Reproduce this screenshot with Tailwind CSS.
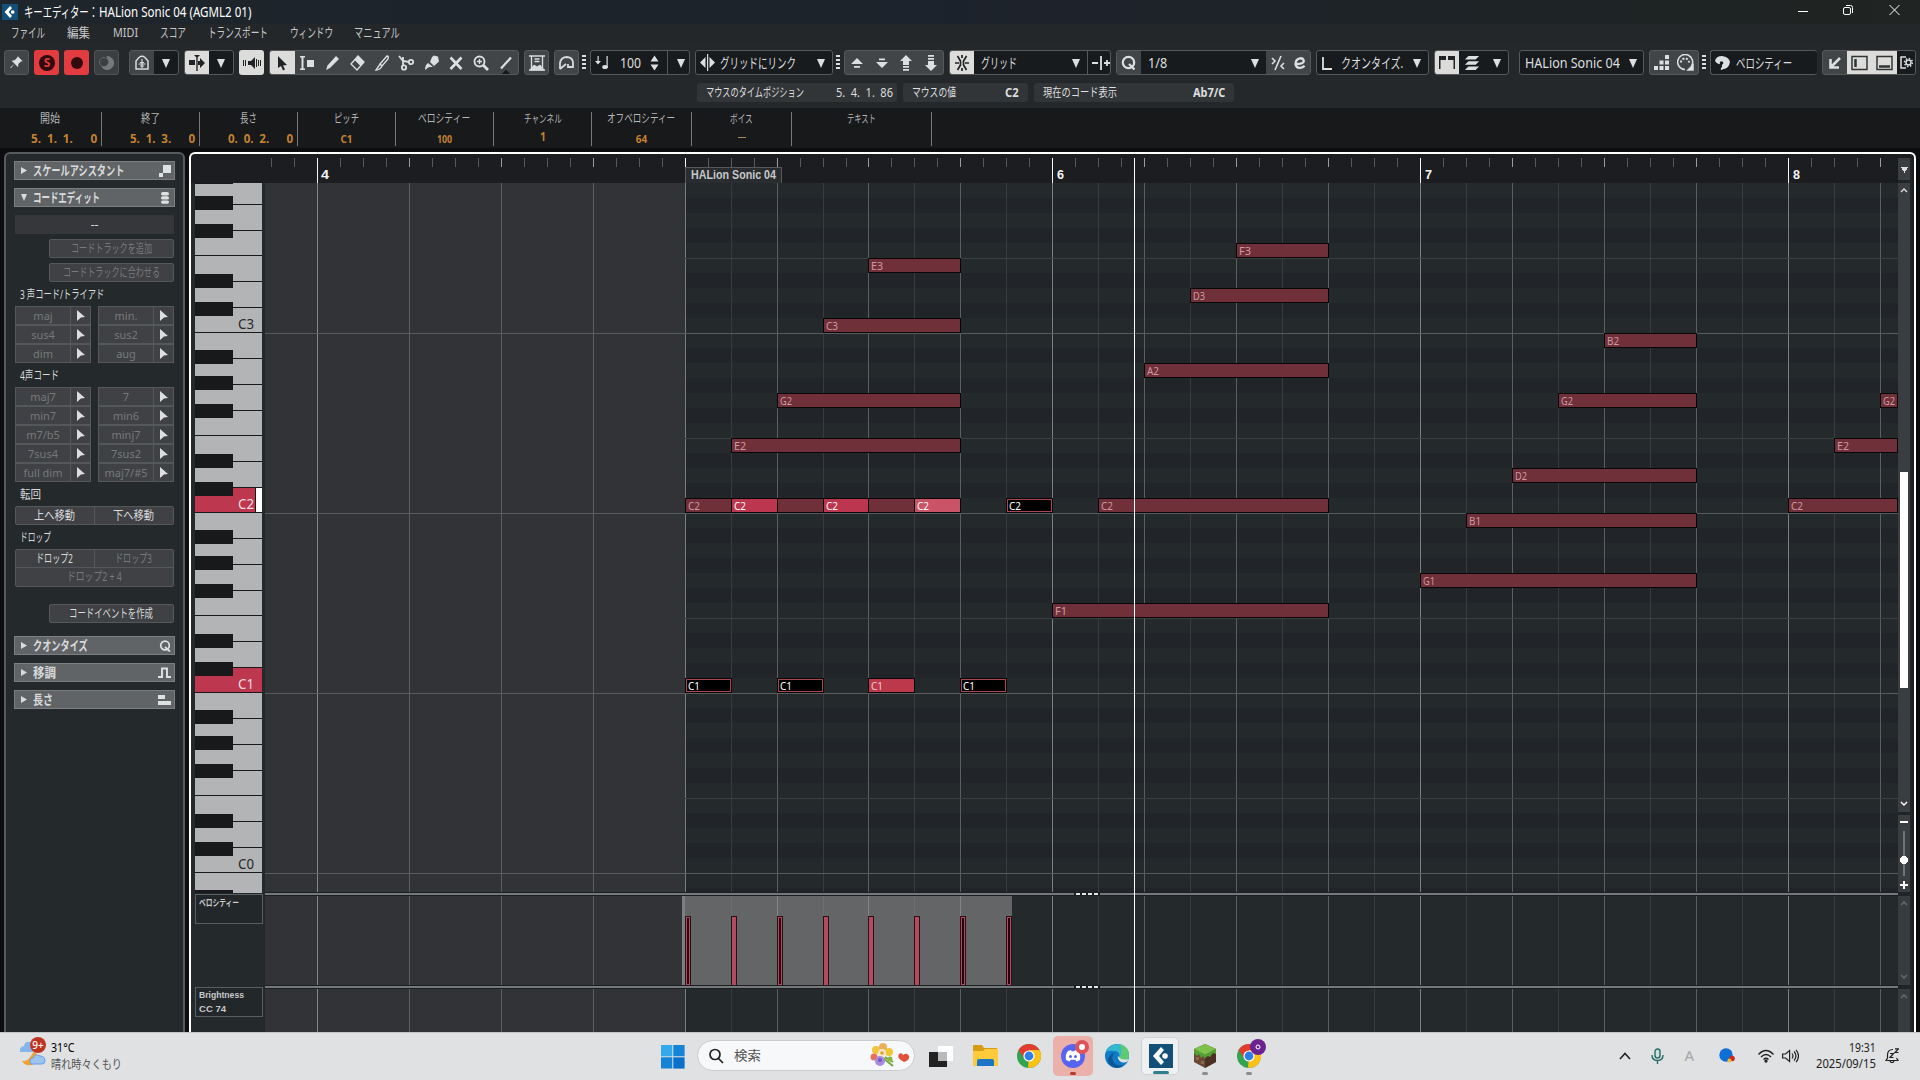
<!DOCTYPE html>
<html lang="ja">
<head>
    <meta charset="UTF-8">
    <meta name="viewport" content="width=device-width, initial-scale=1.0">
    <title>キーエディター： HALion Sonic 04</title>
    <script src="https://cdn.jsdelivr.net/npm/@tailwindcss/browser@4"></script>
    <style>
        body { font-family: "Noto Sans", "Noto Sans CJK JP", sans-serif; }
        [data-w] { display: inline-block; white-space: nowrap; flex-shrink: 0; transform-origin: 0 50%; }
    </style>
</head>
<body class="w-[1920px] h-[1080px] overflow-hidden bg-[#0c0d0e] text-[#dcdedf] text-[13px] leading-none flex flex-col">

    <!-- Icon sprites -->
    <svg class="hidden">
        <symbol id="pin" viewBox="0 0 24 24"><path d="M14 2l8 8-3 .5-4 4-.5 5L9 14l-6 7-1-1 7-6-5-5 5-.5 4-4z" fill="currentColor"/></symbol>
        <symbol id="down" viewBox="0 0 8 10"><path d="M0 1h8L4 10z" fill="currentColor"/></symbol>
        <symbol id="cursor" viewBox="0 0 8 11"><path d="M0 0l8 7-4 .5L0 11z" fill="currentColor"/></symbol>
        <symbol id="dots" viewBox="0 0 4 14"><path d="M0 0h4v2H0zM0 4h4v2H0zM0 8h4v2H0zM0 12h4v2H0z" fill="currentColor"/></symbol>
        <symbol id="cubase" viewBox="0 0 24 24"><path d="M0 0h24v24H0z" fill="#135078"/><path d="M12 3l3 3-5 6 5 6-3 3-8-9z" fill="#fff"/><circle cx="16" cy="12" r="2.8" fill="#fff"/></symbol>
        <symbol id="chrome" viewBox="0 0 24 24"><circle cx="12" cy="12" r="12" fill="#33a350"/><path d="M12 12l10.400-6A12 12 0 0 1 12 24l-1-1z" fill="#fbc116"/><path d="M22.400 6H12v6l5 3z" fill="#fbc116"/><path d="M1.600 6A12 12 0 0 1 12 0a12 12 0 0 1 10.400 6H12L7 14z" fill="#e33b2e"/><circle cx="12" cy="12" r="5.600" fill="#fff"/><circle cx="12" cy="12" r="4.400" fill="#2f7de8"/></symbol>
    </svg>

    <!-- Title bar -->
    <header class="h-6 shrink-0 bg-linear-to-r from-[#1e252b] via-[#1c222b] to-[#202422] flex items-center pl-[2px] text-white">
        <svg class="w-4 h-4 mr-[6px]"><use href="#cubase"/></svg>
        <span data-w="74" class="text-[14px]">キーエディター：</span>
        <span data-w="152" class="text-[14px] ml-[1px]">HALion Sonic 04 (AGML2 01)</span>
        <div class="ml-auto flex items-center gap-[35px] pr-5 -mt-1">
            <svg class="w-[10px] h-[12px]"><path d="M0 7.500h10" stroke="#fff"/></svg>
            <svg class="w-[11px] h-[12px]" fill="none" stroke="#fff"><rect x=".5" y="3.500" width="7" height="7" rx="1.500"/><path d="M3 1.500h4.500q2 0 2 2V9"/></svg>
            <svg class="w-[11px] h-[12px]"><path d="M.5 1l10 10M10.500 1l-10 10" stroke="#fff"/></svg>
        </div>
    </header>

    <!-- Menu -->
    <nav class="h-[18px] shrink-0 bg-[#23272a] flex items-center pl-[11px] pb-[2px] text-[13px] text-[#c6c8c9]">
        <span data-w="34">ファイル</span>
        <span data-w="23" class="ml-[22px]">編集</span>
        <span data-w="25" class="ml-[23px]">MIDI</span>
        <span data-w="26" class="ml-[22px]">スコア</span>
        <span data-w="60" class="ml-[22px]">トランスポート</span>
        <span data-w="43" class="ml-[22px]">ウィンドウ</span>
        <span data-w="46" class="ml-[21px]">マニュアル</span>
    </nav>

    <!-- Toolbar -->
    <div class="h-[41px] pt-2 shrink-0 bg-[#24282b] flex gap-[5px] pl-1 [&>div]:h-[25px] [&>div]:flex [&>div]:items-center [&>div]:shrink-0 [&>div]:rounded-[3px] [&>div]:overflow-hidden [&_svg]:shrink-0">
        <div class="w-[25px] bg-[#424548] border border-[#56595c] justify-center"><svg class="w-[15px] h-[15px]"><use href="#pin"/></svg></div>
        <div class="w-[25px] bg-[#e23b40] justify-center"><svg class="w-4 h-4" viewBox="0 0 16 16"><circle cx="8" cy="8" r="8" fill="#300a0c"/><text x="8" y="12.300" text-anchor="middle" font-size="12" font-weight="700" fill="#e23b40">S</text></svg></div>
        <div class="w-[25px] bg-[#e23b40] justify-center"><i class="size-3 rounded-full bg-[#300a0c]"></i></div>
        <div class="w-[25px] bg-[#3c3f42] border border-[#505356] justify-center"><svg class="w-4 h-4" viewBox="0 0 16 16" fill="none" stroke="#777a7d"><path d="M8 1.500a6.500 6.500 0 1 1-5 10.500A7 7 0 0 0 8 1.500z" fill="#777a7d"/><circle cx="5" cy="7" r="4.500" fill="#3c3f42" stroke="#65686b"/></svg></div>
        <div class="w-[50px] ml-[5px] bg-[#181b1d] border border-[#56595c]">
            <span class="w-6 h-full bg-[#424548] flex items-center justify-center"><svg class="w-4 h-4" viewBox="0 0 16 16" fill="none" stroke="#d8dadb" stroke-width="1.500"><path d="M2 14V6l3-3.500Q8 0 11 2.500L14 6v8z"/><path d="M8 4v9M4.500 9h7M6 7.500h4M6 11h4" stroke-width="1.200"/></svg></span>
            <svg class="w-2 h-[10px] mx-auto"><use href="#down"/></svg>
        </div>
        <div class="w-[50px] bg-[#181b1d] border border-[#56595c]">
            <span class="w-6 h-full bg-[#dcdcda] flex items-center justify-center"><svg class="w-4 h-4" viewBox="0 0 16 16" fill="#202426"><path d="M7.300 0h1.400v16H7.300zM5 0h6L8 3zM0 5h6v5H0zM9 6h2V3l5 5-5 5v-3H9z"/></svg></span>
            <svg class="w-2 h-[10px] mx-auto"><use href="#down"/></svg>
        </div>
        <div class="w-[25px] bg-[#dcdcda] justify-center"><svg class="w-[18px] h-4" viewBox="0 0 18 16" fill="#202426"><path d="M5 6h3l4-4v12l-4-4H5zM0 5h1v6H0zM2 5h1v6H2zM13 4h1v8h-1zM15 5h1v6h-1zM17 5h1v6h-1z"/></svg></div>
        <div class="w-[250px] bg-[#424548] border border-[#56595c] [&>span]:w-[25px] [&>span]:h-full [&>span]:flex [&>span]:items-center [&>span]:justify-center [&_svg]:w-4 [&_svg]:h-4">
            <span class="bg-[#dcdcda]"><svg viewBox="0 0 16 16"><path d="M4 1l9 9-4 .5 2 4-2 1-2-4.500L4 13z" fill="#202426"/></svg></span>
            <span><svg viewBox="0 0 16 16"><path d="M1 1h5v1.500H4.500v11H6V15H1v-1.500h1.500v-11H1zM8 5h7v7H8z" fill="currentColor"/></svg></span>
            <span><svg viewBox="0 0 16 16"><path d="M12 1l3 3-9 9-4 2 1.500-4.500z" fill="currentColor"/></svg></span>
            <span><svg viewBox="0 0 16 16"><path d="M9 1l6 6-7 8-6-6z" fill="none" stroke="currentColor" stroke-width="1.300"/><path d="M9 1l6 6-3.500 4-6-6z" fill="currentColor"/></svg></span>
            <span><svg viewBox="0 0 16 16"><path d="M6 9l7-8q2 0 1 3L8 11zM6 9l2 2q-2 4-6 4z" fill="none" stroke="currentColor" stroke-width="1.400"/></svg></span>
            <span><svg viewBox="0 0 16 16" fill="none" stroke="currentColor" stroke-width="1.800"><path d="M1 1l4 5 6 1M5 2v8"/><circle cx="13" cy="7" r="2.200"/><circle cx="6" cy="12.500" r="2.200"/></svg></span>
            <span><svg viewBox="0 0 16 16" fill="currentColor"><path d="M9 2l2-1.500 4 1 1 5-5 4.500-4-4zM5 8l5 4-4 0-4 3q0-5 3-7z"/></svg></span>
            <span><svg viewBox="0 0 16 16"><path d="M2.500 2.500l11 11.500M13.500 2.500l-11 11.500" stroke="currentColor" stroke-width="2.600"/></svg></span>
            <span><svg viewBox="0 0 16 16" fill="none" stroke="currentColor" stroke-width="1.900"><circle cx="6.500" cy="6.500" r="5"/><path d="M10 10l5 5" stroke-width="2.800"/><path d="M4 6.500h5M6.500 4v5" stroke-width="1.400"/></svg></span>
            <span class="relative"><svg viewBox="0 0 16 16"><path d="M3 13.500l10-11" stroke="currentColor" stroke-width="2.200"/></svg><i class="absolute bottom-[-3px] size-[6px] rotate-45 bg-[#15181a]"></i></span>
        </div>
        <div class="w-[25px] bg-[#424548] border border-[#56595c] justify-center"><svg class="w-4 h-4" viewBox="0 0 16 16" fill="none" stroke="#d8dadb"><path d="M0 1h16M0 15h16M2.500 1v13M13.500 1v13M5.500 4h5M5.500 6.500h5" stroke-width="1.400"/><path d="M1 15l4-5 3 2 3-2 4 5z" fill="#d8dadb"/></svg></div>
        <div class="w-[25px] bg-[#424548] border border-[#56595c] justify-center"><svg class="w-[17px] h-4" viewBox="0 0 17 16" fill="none" stroke="#d8dadb" stroke-width="1.800"><path d="M2 14V8q1-6 7-6 6 .5 6 6v5M2 14l6-5M10 9v3h5"/></svg></div>
        <span class="w-[1px] pt-[5px]"><svg class="w-1 h-[14px] -ml-[2px]"><use href="#dots"/></svg></span>
        <div class="w-[100px] bg-[#181b1d] border border-[#56595c]">
            <svg class="w-[15px] h-[15px] ml-1" viewBox="0 0 15 15" fill="currentColor"><path d="M2.500 1h1.200v5H6L3 9.500 0 6h2.500zM11.500 1h1.200v12h-1.200z"/><ellipse cx="10" cy="12" rx="2.800" ry="2"/></svg>
            <span data-w="21" class="ml-[10px] text-[14px]">100</span>
            <svg class="w-[9px] h-[18px] ml-[9px]" viewBox="0 0 9 18" fill="currentColor"><path d="M4.500 1.500L8.500 7.500h-8zM.5 10.500h8L4.500 16.500z"/></svg>
            <i class="w-px h-full bg-[#56595c] ml-[8px]"></i>
            <svg class="w-2 h-[10px] ml-[9px]"><use href="#down"/></svg>
        </div>
        <div class="w-[138px] bg-[#181b1d] border border-[#56595c]">
            <svg class="w-[15px] h-[17px] ml-1 mr-[5px]" viewBox="0 0 15 17" fill="currentColor"><path d="M5.500 3v11L0 8.500zM7 0h1.200v17H7zM9.500 3v11L15 8.500z"/></svg>
            <span data-w="76" class="text-[14px]">グリッドにリンク</span>
            <svg class="w-2 h-[10px] ml-[21px]"><use href="#down"/></svg>
        </div>
        <span class="w-[1px] pt-[5px]"><svg class="w-1 h-[14px] -ml-[2px]"><use href="#dots"/></svg></span>
        <div class="w-[100px] bg-[#424548] border border-[#56595c] justify-around [&>svg]:w-3 [&>svg]:h-[16px]">
            <svg viewBox="0 0 12 16" fill="currentColor"><path d="M6 3l6 6H0zM3 11h6v1.800H3z"/></svg>
            <svg viewBox="0 0 12 16" fill="currentColor"><path d="M6 13L0 7h12zM3 3.500h6v1.800H3z"/></svg>
            <svg viewBox="0 0 12 16" fill="currentColor"><path d="M6 0l6 6H9v4H3V6H0zM3 11h6v1.800H3zM3 14h6v1.800H3z"/></svg>
            <svg viewBox="0 0 12 16" fill="currentColor"><path d="M6 16l-6-6h3V6h6v4h3zM3 0h6v1.800H3zM3 3h6v1.800H3z"/></svg>
        </div>
        <div class="w-[162px] bg-[#181b1d] border border-[#56595c]">
            <span class="w-6 h-full bg-[#dcdcda] flex items-center justify-center"><svg class="w-[14px] h-4" viewBox="0 0 14 16" fill="none" stroke="#202426" stroke-width="1.700"><path d="M2.500 1l3 5v4l-3 5M11.500 1l-3 5v4l3 5M0 8h4M14 8h-4M7 0v3M7 13v3"/></svg></span>
            <span data-w="36" class="ml-[7px] text-[14px]">グリッド</span>
            <svg class="w-2 h-[10px] ml-[55px]"><use href="#down"/></svg>
            <i class="w-px h-full bg-[#56595c] ml-[7px]"></i>
            <svg class="w-[18px] h-4 ml-[4px]" viewBox="0 0 18 16" stroke="currentColor" stroke-width="1.800"><path d="M0 8h6M9 1v14M12 8h6M15 5v6"/></svg>
        </div>
        <div class="w-[195px] bg-[#181b1d] border border-[#56595c]">
            <span class="w-6 h-full bg-[#424548] flex items-center justify-center"><svg class="w-4 h-4" viewBox="0 0 16 16" fill="none" stroke="#dcdedf" stroke-width="2.200"><circle cx="7.500" cy="7.500" r="5.700"/><path d="M8 9l5.500 5.500"/></svg></span>
            <span data-w="19" class="ml-[7px] text-[14px]">1/8</span>
            <svg class="w-2 h-[10px] ml-[84px]"><use href="#down"/></svg>
            <span class="ml-auto w-[44px] h-full bg-[#424548] flex items-center justify-around"><svg class="w-[14px] h-4" viewBox="0 0 14 16" fill="none" stroke="#dcdedf" stroke-width="1.600"><path d="M10 1L4 15M1 3l3 3-3 3M13 8l-3 3 3 3"/></svg><svg class="w-3 h-3" viewBox="0 0 12 12" fill="none" stroke="#dcdedf" stroke-width="2.300"><path d="M2 7Q10 7 9.800 3.800 9 1 6 1.300 1.500 2 1.500 7 2 11 6 10.800q3 0 4.500-2"/></svg></span>
        </div>
        <div class="w-[113px] bg-[#181b1d] border border-[#56595c]">
            <svg class="w-[10px] h-4 ml-[5px]" viewBox="0 0 10 16" fill="none" stroke="#dcdedf" stroke-width="1.800"><path d="M1 2v12h9"/></svg>
            <span data-w="62" class="ml-[9px] text-[14px]">クオンタイズ.</span>
            <svg class="w-2 h-[10px] ml-[10px]"><use href="#down"/></svg>
        </div>
        <div class="w-[75px] bg-[#181b1d] border border-[#56595c]">
            <span class="w-6 h-full bg-[#dcdcda] flex items-center justify-center"><svg class="w-4 h-[18px]" viewBox="0 0 16 18" fill="#202426"><path d="M0 2h7v4H1.500v9H0zM9 2h7v13h-1.500V6H9z"/></svg></span>
            <svg class="w-4 h-[16px] ml-[5px]" viewBox="0 0 16 18" fill="currentColor"><path d="M4 1h12l-4 4H0zM4 7h12l-4 4H0zM4 13h12l-4 4H0z"/></svg>
            <svg class="w-2 h-[10px] ml-[13px]"><use href="#down"/></svg>
        </div>
        <div class="w-[125px] ml-[5px] bg-[#181b1d] border border-[#56595c]">
            <span data-w="95" class="ml-[5px] text-[14px]">HALion Sonic 04</span>
            <svg class="w-2 h-[10px] ml-[9px]"><use href="#down"/></svg>
        </div>
        <div class="w-[50px] bg-[#424548] border border-[#56595c] justify-around">
            <svg class="w-[15px] h-[15px]" viewBox="0 0 15 15" fill="currentColor"><path d="M0 11h4v4H0zM5.500 11h4v4h-4zM11 11h4v4h-4zM5.500 5.500h4v4h-4zM11 5.500h4v4h-4zM11 0h4v4h-4z"/></svg>
            <svg class="w-[17px] h-[17px]" viewBox="0 0 17 17" fill="none" stroke="#dcdedf" stroke-width="1.500"><path d="M14.500 12A7.500 7.500 0 1 0 8 15.500"/><path d="M4 8.500a4 4 0 0 1 8 0" stroke-width="2" stroke-dasharray="2 1.500"/><path d="M16 11v5h-5z" fill="#dcdedf"/></svg>
        </div>
        <span class="w-[1px] pt-[5px]"><svg class="w-1 h-[14px] -ml-[2px]"><use href="#dots"/></svg></span>
        <div class="w-[107px] bg-[#181b1d] border border-r-0 border-[#56595c]">
            <svg class="w-[15px] h-4 ml-1" viewBox="0 0 15 16" fill="currentColor"><path d="M0 6q1-5 7-5 7 1 8 6-1 6-6 7l-3 1q-1-2 1-3V8Q3 11 0 6z"/><circle cx="6.500" cy="8" r="1.800" fill="#181b1d"/></svg>
            <span data-w="56" class="ml-[6px] text-[14px]">ベロシティー</span>
        </div>
        <div class="w-[94px] bg-[#424548] border border-[#56595c]">
            <span class="w-6 flex justify-center"><svg class="w-3 h-3" viewBox="0 0 12 12" fill="none" stroke="#dcdedf" stroke-width="2.600"><path d="M11 1L2 10M1.500 2v8.500H10"/></svg></span>
            <span class="w-[50px] h-full bg-[#dcdcda] flex items-center justify-around"><svg class="w-[17px] h-4" viewBox="0 0 17 16" fill="none" stroke="#303436" stroke-width="1.500"><path d="M1 1.500h15v13H1z"/><path d="M4.500 4v8" stroke-width="2.500"/></svg><svg class="w-[17px] h-4" viewBox="0 0 17 16" fill="none" stroke="#303436" stroke-width="1.500"><path d="M1 1.500h15v13H1z"/><path d="M3 11.500h11" stroke-width="2.500"/></svg></span>
            <span class="flex-1 h-full bg-[#181b1d] flex items-center justify-center"><svg class="w-[13px] h-[13px]" viewBox="0 0 13 13" fill="none" stroke="#dcdedf" stroke-width="1.500"><path d="M6 1H1v11h5"/><circle cx="8.500" cy="6.500" r="2.500"/><circle cx="8.500" cy="6.500" r="4" stroke-dasharray="1.500 1.600"/></svg></span>
        </div>
    </div>

    <!-- Status line -->
    <div class="h-[25px] shrink-0 bg-[#24282b] flex gap-[6px] pl-[697px] text-[12px] [&>div]:h-[19px] [&>div]:bg-[#323538] [&>div]:rounded-[3px] [&>div]:flex [&>div]:items-center [&>div]:justify-between [&>div]:px-[9px]">
        <div class="w-[200px]"><span data-w="98">マウスのタイムポジション</span><span data-w="57" class="-mr-[5px]">5.&ensp;4.&ensp;1.&ensp;86</span></div>
        <div class="w-[125px]"><span data-w="44">マウスの値</span><span data-w="14" class="font-bold">C2</span></div>
        <div class="w-[200px]"><span data-w="74">現在のコード表示</span><span data-w="32" class="font-bold">Ab7/C</span></div>
    </div>

    <!-- Info line -->
    <div class="h-10 shrink-0 bg-[#17191b] flex items-start pt-1 text-[12px] text-[#b4b6b7] [&>div]:h-[34px] [&>div]:border-r [&>div]:border-[#76797a] [&>div]:flex [&>div]:flex-col [&>div]:items-center [&>div]:pt-[1px] [&>div]:gap-[7px]">
        <div class="w-[102px]"><span data-w="20">開始</span><b class="w-full pl-[31px] text-[#c5812f]"><span data-w="66" class="text-[13px]">5.&ensp;1.&ensp;1.&emsp;&ensp;0</span></b></div>
        <div class="w-[98px]"><span data-w="19">終了</span><b class="w-full pl-[28px] text-[#c5812f]"><span data-w="65" class="text-[13px]">5.&ensp;1.&ensp;3.&emsp;&ensp;0</span></b></div>
        <div class="w-[98px]"><span data-w="17">長さ</span><b class="w-full pl-[28px] text-[#c5812f]"><span data-w="65" class="text-[13px]">0.&ensp;0.&ensp;2.&emsp;&ensp;0</span></b></div>
        <div class="w-[98px]"><span data-w="25" class="text-[12px]">ピッチ</span><b data-w="12" class="text-[10px] text-[#c5812f] pt-[2px]">C1</b></div>
        <div class="w-[98px]"><span data-w="52" class="text-[12px]">ベロシティー</span><b data-w="15" class="text-[10px] text-[#c5812f] pt-[2px]">100</b></div>
        <div class="w-[98px]"><span data-w="38" class="text-[11px]">チャンネル</span><b data-w="6" class="text-[12px] text-[#c5812f]">1</b></div>
        <div class="w-[100px]"><span data-w="68" class="text-[12px]">オフベロシティー</span><b data-w="11" class="text-[10px] text-[#c5812f] pt-[2px]">64</b></div>
        <div class="w-[100px]"><span data-w="23" class="text-[11px]">ボイス</span><i class="w-2 h-px bg-[#a08a55] mt-[6px]"></i></div>
        <div class="w-[140px]"><span data-w="29" class="text-[11px]">テキスト</span></div>
    </div>

    <main class="h-[884px] shrink-0 flex pt-1 pl-1">
        <!-- Inspector -->
        <aside class="w-[181px] h-[881px] shrink-0 bg-[#24292c] border-2 border-b-0 border-[#585b5d] rounded-t-[6px] px-2 pt-[7px] text-[12px] text-[#d8dadb]">
            <div class="h-[19px] bg-[#606466] border border-[#7b7f81] flex items-center pl-[6px] pr-[3px] font-bold text-[13px]"><svg class="w-[6px] h-[7px] mr-[6px]"><path d="M0 0l6 3.500L0 7z" fill="currentColor"/></svg><span data-w="91">スケールアシスタント</span><svg class="w-3 h-3 ml-auto" fill="#dfe1e1"><path d="M4 0h8v8H4zM0 8h4v4H0z"/></svg></div>
            <div class="h-[19px] mt-2 bg-[#606466] border border-[#7b7f81] flex items-center pl-[6px] pr-[3px] font-bold text-[13px]"><svg class="w-[6px] h-[7px] mr-[6px]"><path d="M0 0h6L3 7z" fill="currentColor"/></svg><span data-w="67">コードエディット</span><svg class="w-3 h-3 ml-auto" fill="#dfe1e1"><rect x="2" y="0" width="8" height="3.400" rx="1.700"/><rect x="2" y="4.200" width="8" height="3.400" rx="1.700"/><rect x="2" y="8.400" width="8" height="3.400" rx="1.700"/></svg></div>
            <div class="h-[19px] mt-2 mx-px bg-[#35373a] flex items-center justify-center">--</div>
            <div class="h-[19px] mt-[5px] ml-[35px] mr-px bg-[#3f4144] border border-[#55585a] rounded-xs text-[#77797b] flex items-center justify-center"><span data-w="81">コードトラックを追加</span></div>
            <div class="h-[19px] mt-[5px] ml-[35px] mr-px bg-[#3f4144] border border-[#55585a] rounded-xs text-[#77797b] flex items-center justify-center"><span data-w="97">コードトラックに合わせる</span></div>
            <div class="h-6 pl-[6px] pt-[7px]"><span data-w="84">3 声コード/トライアド</span></div>
            <div id="triads" class="grid grid-cols-2 gap-x-[7px] mx-px text-[#77797b]"></div>
            <div class="h-6 pl-[6px] pt-[7px]"><span data-w="39">4声コード</span></div>
            <div id="tetrads" class="grid grid-cols-2 gap-x-[7px] mx-px text-[#77797b]"></div>
            <div class="h-6 pl-[6px] pt-[7px]"><span data-w="21">転回</span></div>
            <div class="h-[19px] mx-px bg-[#3f4144] border border-[#55585a] rounded-xs grid grid-cols-2 divide-x divide-[#55585a] items-stretch [&>div]:flex [&>div]:items-center [&>div]:justify-center"><div><span data-w="41">上へ移動</span></div><div><span data-w="41">下へ移動</span></div></div>
            <div class="h-6 pl-[6px] pt-[7px]"><span data-w="31">ドロップ</span></div>
            <div class="h-[38px] mx-px bg-[#3f4144] border border-[#55585a] rounded-xs grid grid-cols-2 grid-rows-2 [&>div]:flex [&>div]:items-center [&>div]:justify-center"><div class="border-r border-b border-[#55585a]"><span data-w="37">ドロップ2</span></div><div class="border-b border-[#55585a] text-[#77797b]"><span data-w="37">ドロップ3</span></div><div class="col-span-2 text-[#77797b]"><span data-w="55">ドロップ2 + 4</span></div></div>
            <div class="h-[19px] mt-[17px] ml-[35px] mr-px bg-[#3f4144] border border-[#55585a] rounded-xs flex items-center justify-center"><span data-w="84">コードイベントを作成</span></div>
            <div class="h-[19px] mt-[13px] bg-[#606466] border border-[#7b7f81] flex items-center pl-[6px] pr-[3px] font-bold text-[13px]"><svg class="w-[6px] h-[7px] mr-[6px]"><path d="M0 0l6 3.500L0 7z" fill="currentColor"/></svg><span data-w="55">クオンタイズ</span><svg class="w-3 h-3 ml-auto" fill="none" stroke="#dfe1e1" stroke-width="1.700"><circle cx="6" cy="5.500" r="4.300"/><path d="M6 7l5 4.500"/></svg></div>
            <div class="h-[19px] mt-2 bg-[#606466] border border-[#7b7f81] flex items-center pl-[6px] pr-[3px] font-bold text-[13px]"><svg class="w-[6px] h-[7px] mr-[6px]"><path d="M0 0l6 3.500L0 7z" fill="currentColor"/></svg><span data-w="23">移調</span><svg class="w-[13px] h-3 ml-auto" fill="none" stroke="#dfe1e1" stroke-width="1.900"><path d="M0 10h4V1.500h5V10h4"/></svg></div>
            <div class="h-[19px] mt-2 bg-[#606466] border border-[#7b7f81] flex items-center pl-[6px] pr-[3px] font-bold text-[13px]"><svg class="w-[6px] h-[7px] mr-[6px]"><path d="M0 0l6 3.500L0 7z" fill="currentColor"/></svg><span data-w="20">長さ</span><svg class="w-[13px] h-3 ml-auto" fill="#dfe1e1"><path d="M0 1h7v4H0zM0 7h13v4H0z"/></svg></div>
        </aside>

        <!-- Editor: piano, note grid and controller lanes -->
        <section id="canvas" class="relative ml-1 w-[1727px] h-[881px] bg-[#1b1d20] border-2 border-b-0 border-white rounded-t-[6px] overflow-hidden"></section>
    </main>

    <!-- Taskbar -->
    <footer class="h-12 w-[1920px] absolute top-[1032px] bg-[#dfe1e3] border-t border-[#c2c4c6] text-[#333] flex">
        <div class="w-[661px] flex pl-5 pt-[5px]">
            <div class="relative w-[31px]">
                <svg class="w-[27px] h-[30px]" viewBox="0 0 27 30"><path d="M0 14q-1-5 4-6 1-5 6-4l3 10z" fill="#86b5ea"/><path d="M14 13a8 8 0 1 1-12 10q7 1 12-10z" fill="#f2a130"/><path d="M11 26q-3-5 2-6 2-5 7-2 5 0 5 5 0 3-3 3z" fill="#9cc4f2" stroke="#6d9fe0"/></svg>
                <b class="absolute left-[10px] -top-px size-4 rounded-full bg-[#bf3323] text-white text-[10px] font-medium flex items-center justify-center">9+</b>
            </div>
            <div class="pt-[3px]"><div><span data-w="23" class="text-[12px] text-black">31°C</span></div><div class="mt-[4px]"><span data-w="71" class="text-[12px] text-[#555]">晴れ時々くもり</span></div></div>
        </div>
        <svg class="w-6 h-6 mt-3 shrink-0" fill="#1584d6"><path d="M0 0h11.300v11.300H0z" fill="#35aaeb"/><path d="M12.300 0h11.300v11.300H12.300zM0 12.300h11.300v11.300H0z"/><path d="M12.300 12.300h11.300v11.300H12.300z" fill="#0c70cb"/></svg>
        <div class="ml-3 mt-[7px] w-[218px] h-[31px] shrink-0 rounded-full bg-[#f7f8f9] border border-[#c9cbcd] flex items-center pl-[10px]">
            <svg class="w-4 h-4 shrink-0" fill="none" stroke="#222" stroke-width="1.700"><circle cx="7" cy="6.500" r="5"/><path d="M10.500 10.500l4.500 4.500"/></svg>
            <span data-w="27" class="ml-[10px] text-[13px] text-[#555]">検索</span>
            <svg class="w-[44px] h-7 ml-auto mr-px shrink-0" viewBox="0 0 44 28"><path d="M14 16l10 8M16 15l8 5" stroke="#6ea83a" stroke-width="2"/><circle cx="7" cy="8" r="4" fill="#f0c53b"/><circle cx="14" cy="5" r="4" fill="#e7b05a"/><circle cx="20" cy="10" r="4" fill="#f2c437"/><circle cx="5" cy="15" r="3.500" fill="#e8715c"/><circle cx="13" cy="11" r="4" fill="#f4e6cc"/><circle cx="11" cy="19" r="5" fill="#a98be0"/><circle cx="13" cy="11" r="1.800" fill="#e2a126"/><circle cx="11" cy="18" r="2" fill="#7456bd"/><circle cx="21" cy="17" r="2.500" fill="#86b843"/><path d="M35 20q-8-4-5-8 3-2 4 1 4-3 6 1 1 4-5 6z" fill="#e2503a"/></svg>
        </div>
        <!-- running apps -->
        <div class="relative ml-[14px] flex [&>svg]:shrink-0 [&>svg]:mt-[11px]">
            <svg class="w-6 h-6" viewBox="0 0 24 24"><path d="M0 8h18v15H0z" fill="#222"/><path d="M9 2h15v15H9z" fill="#fff"/><path d="M9 8h9v9H9z" fill="#b9babb"/></svg>
            <svg class="w-[25px] h-6 ml-5" viewBox="0 0 25 24"><path d="M0 2q0-1 1-1h8l2 3h13v5H0z" fill="#d79b16"/><path d="M0 7h10l2-2h13v17H0z" fill="#fccb3c"/><path d="M4 22v-5q0-2 2-2h13q2 0 2 2v5z" fill="#1c76c5"/></svg>
            <svg class="w-6 h-6 ml-[19px]"><use href="#chrome"/></svg>
            <div class="relative ml-3 mt-[3px] w-10 h-10 rounded-[5px] bg-[#ebb0aa]">
                <svg class="w-6 h-6 absolute left-2 top-2" viewBox="0 0 24 24"><circle cx="12" cy="12" r="12" fill="#5764ef"/><path d="M5 16q-1-6 2-9l3-1 .6 1.300h2.800L14 6l3 1q3 3 2 9l-3.500 1.500-1.200-1.800H9.700L8.500 17.500z" fill="#fff"/><circle cx="9.500" cy="12.500" r="1.500" fill="#5764ef"/><circle cx="14.500" cy="12.500" r="1.500" fill="#5764ef"/></svg>
                <i class="absolute left-[22px] top-1 size-[14px] rounded-full bg-white border-4 border-[#dd5358]"></i>
                <i class="absolute left-[17px] bottom-[1px] w-[6px] h-[3px] rounded-full bg-[#b83a2b]"></i>
            </div>
            <svg class="w-6 h-6 ml-3" viewBox="0 0 24 24"><circle cx="12" cy="12" r="12" fill="#1279c5"/><path d="M1 8Q5 0 13 0q10 1 11 11 0 6-7 6-4 0-3-3 2-6-4-7Q4 6 1 8z" fill="#34b8cf"/><path d="M15 0q9 3 9 11 0 6-7 6-4 0-3-3 4-6 1-14z" fill="#5ccb72"/><path d="M10 8q-4 4-2 9 3 6 11 4-7 6-14 0-6-7 5-13z" fill="#0c5797"/><path d="M24 15q-2 5-8 3-4-3-3-6 3 5 11 3z" fill="#dfe1e3"/></svg>
            <div class="relative ml-3 mt-[4px] w-[38px] h-[38px] rounded-[5px] bg-[#eef0f2] border border-[#d0d2d4]">
                <svg class="w-6 h-6 absolute left-[7px] top-[6px]"><use href="#cubase"/></svg>
                <i class="absolute left-[11px] bottom-0 w-4 h-[3px] rounded-full bg-[#2f7f8f]"></i>
            </div>
            <svg class="w-[22px] h-6 ml-[15px]" viewBox="0 0 22 24"><path d="M11 0l11 5v13l-11 6L0 18V5z" fill="#6b4934"/><path d="M11 11l11-6v13l-11 6z" fill="#4b3124"/><path d="M11 0l11 5-11 6L0 5z" fill="#7cc24c"/><path d="M0 5l11 6v4l-2-3-2 2-2-4-2 2-3-3zM22 5l-11 6v3l3-2 2 1 3-4 3 1z" fill="#55a035"/><path d="M2 13h3v3H2zM7 17h3v3H7z" fill="#8d6a4e"/></svg>
            <svg class="w-6 h-6 ml-[21px]"><use href="#chrome"/></svg>
            <svg class="w-4 h-4 absolute left-[321px] -top-[5px]" viewBox="0 0 16 16"><circle cx="8" cy="8" r="8" fill="#6c2390"/><circle cx="8" cy="8" r="2" fill="none" stroke="#fff"/></svg>
            <i class="absolute left-[273px] top-[39px] w-[6px] h-[3px] rounded-full bg-[#8a8c8e]"></i>
            <i class="absolute left-[317px] top-[39px] w-[6px] h-[3px] rounded-full bg-[#8a8c8e]"></i>
        </div>
        <!-- tray -->
        <div class="ml-auto flex items-center pb-[2px] pr-[21px] text-[#222]">
            <svg class="w-3 h-2" fill="none" stroke="#222" stroke-width="1.600"><path d="M1 7l5-5.500L11 7"/></svg>
            <svg class="w-[13px] h-4 ml-5" fill="none" stroke="#2b6b66" stroke-width="1.400"><rect x="4" y="1" width="5" height="9" rx="2.500" fill="#c9e3df"/><path d="M1 7q0 5.500 5.500 5.500T12 7M6.500 12.500V16"/></svg>
            <span class="ml-[20px] text-[15px] text-[#a4a6a8]">A</span>
            <svg class="w-4 h-4 ml-[25px]"><circle cx="7" cy="7" r="6.700" fill="#0b6fd6"/><circle cx="13" cy="10.500" r="2.800" fill="#c7291f"/><circle cx="10.500" cy="12.500" r="2" fill="#f2bd35"/></svg>
            <svg class="w-4 h-[14px] ml-[23px]" fill="none" stroke="#222" stroke-width="1.300"><path d="M.5 5.500q7.500-8 15 0M3 8q5-5 10 0M5.500 10.500q2.500-2.500 5 0"/><circle cx="8" cy="12" r="1" fill="#222"/></svg>
            <svg class="w-[17px] h-[14px] ml-2" fill="none" stroke="#222" stroke-width="1.200"><path d="M.6 5h3l4-3.500v11L3.600 9h-3zM10 4.500q2 2.500 0 5M12 2.500q4 4.500 0 9M14 .8q5 6.200 0 12.400"/></svg>
            <div class="ml-4 w-[61px] text-right text-[12px]"><div><span data-w="27">19:31</span></div><div class="mt-[4px]"><span data-w="60">2025/09/15</span></div></div>
            <svg class="w-[14px] h-[15px] ml-[9px]" fill="none" stroke="#222" stroke-width="1.200"><path d="M8 1.500Q2.500 1.500 2.500 7v3L1 12.500h12L11.500 10M5 12.500q0 2 2 2t2-2M5 5.500h3.500L5 9.500h3.500M10 .8h3.500L10 4.500h3.500"/></svg>
        </div>
    </footer>

    <script>
        const X0 = 191, Y0 = 154; // inner origin of the editor canvas
        const canvas = document.getElementById('canvas');

        // --- CHORD BUTTONS ---
        function chordButtons(id, names) {
            document.getElementById(id).innerHTML = names.map(n =>
                `<div class="h-[19px] bg-[#3f4144] border border-[#55585a] flex items-center"><span class="flex-1 text-center text-[11px]">${n}</span><span class="w-5 h-full border-l border-[#55585a] flex items-center justify-center text-[#dcdedf]"><svg class="w-2 h-[11px]"><use href="#cursor"/></svg></span></div>`).join('');
        }
        chordButtons('triads', ['maj', 'min.', 'sus4', 'sus2', 'dim', 'aug']);
        chordButtons('tetrads', ['maj7', '7', 'min7', 'min6', 'm7/b5', 'minj7', '7sus4', '7sus2', 'full dim', 'maj7/#5']);

        // --- GRID ---
        const bars = [-51, 317, 685, 1052, 1420, 1788];
        // bar 5 is one pixel shorter than the others
        const stepX = (bar, j) => bars[bar] + j * 46 - (bar === 2 && j > 3 ? 1 : 0);
        // x of the n-th eighth counted from bar 5
        const eighthX = n => stepX(2 + Math.floor(n / 8), n % 8);

        let s = '';
        const rect = (x, y, w, h, fill) => { s += `<rect x="${x - X0}" y="${y - Y0}" width="${w}" height="${h}" fill="${fill}"/>`; };
        const text = (x, y, t, size, fill, w, weight = 400, family = 'Noto Sans') => { s += `<text x="${x - X0}" y="${y - Y0}" font-family="${family}, Noto Sans CJK JP, sans-serif" font-size="${size}" font-weight="${weight}" fill="${fill}" textLength="${w}" lengthAdjust="spacingAndGlyphs">${t}</text>`; };

        rect(191, 183, 74, 850, '#24292c');
        rect(265, 158, 1633, 25, '#1b1d20');
        rect(265, 183, 420, 850, '#323336');
        rect(685, 183, 1213, 850, '#24292c');
        for (let p = -2; p < 47; p++) {
            const top = 858 - p * 15, note = ((p % 12) + 12) % 12;
            const y = Math.max(top, 183), h = Math.min(top + 15, 892) - y;
            if (h <= 0) continue;
            if ([1, 3, 6, 8, 10].includes(note)) rect(685, y, 1213, h, '#212428');
        }
        // ruler and vertical lines
        bars.forEach((b, i) => {
            for (let j = 0; j < 8; j++) {
                const x = stepX(i, j), lit = i >= 2;
                if (x > 264 && x < 1898) {
                    if (lit || j % 2 === 0) rect(x, 183, 1, 850, j === 0 ? (lit ? '#7a7e80' : '#85888a') : j % 2 === 0 ? '#5b5f61' : '#383c3e');
                    rect(x, 158, 1, j === 0 ? 25 : 9, j === 0 ? '#f4f4f4' : j % 2 === 0 ? '#999b9c' : '#55585a');
                }
                if (x + 23 > 264 && x + 23 < 1898) rect(x + 23, 158, 1, 9, '#55585a');
            }
        });
        // octave and fourth lines
        [333, 513, 693, 873].forEach(y => rect(265, y, 1633, 1, '#585b5d'));
        [258, 438, 618, 798].forEach(y => rect(685, y, 1213, 1, '#3c4043'));
        text(321, 179, '4', 13, '#f4f4f4', 8, 700, 'Liberation Sans');
        text(1057, 179, '6', 13, '#f4f4f4', 7, 700, 'Liberation Sans');
        text(1425, 179, '7', 13, '#f4f4f4', 7, 700, 'Liberation Sans');
        text(1793, 179, '8', 13, '#f4f4f4', 7, 700, 'Liberation Sans');
        rect(685, 167, 97, 16, '#55595b');
        rect(686, 168, 95, 15, '#292d2f');
        text(691, 179, 'HALion Sonic 04', 12, '#c6c8c9', 85, 700, 'Liberation Sans');

        // --- PIANO ---
        rect(195, 183, 67, 710, '#b3b4b6');
        rect(195, 668, 67, 24, '#bd384e');
        rect(195, 488, 61, 24, '#bd384e');
        rect(255, 488, 1, 24, '#17191b');
        rect(256, 488, 6, 24, '#fff');
        for (let b = 333; b <= 1053; b += 180) {
            [1, 26, 52, 78, 103, 129, 155].forEach(d => { if (b - d > 183 && b - d < 893) rect(195, b - d, 67, 1, '#17191b'); });
            [31, 59, 109, 137, 163].forEach(d => {
                const y = Math.max(b - d, 183), h = Math.min(b - d + 14, 893) - y;
                if (h > 0) rect(195, y, 38, h, '#17191b');
            });
        }
        rect(195, 183, 38, 1, '#17191b');
        text(238, 329, 'C3', 14, '#26282a', 16);
        text(238, 509, 'C2', 14, '#f4dde0', 16);
        text(238, 689, 'C1', 14, '#f4dde0', 16);
        text(238, 869, 'C0', 14, '#26282a', 16);

        // --- NOTES: [name, start, end, style] ---
        const semis = { C: 0, D: 2, E: 4, F: 5, G: 7, A: 9, B: 11 };
        const styles = {
            dim: ['#6f303a', '#cf9aa0'], sel: ['#bd3650', '#fff'], light: ['#cb5368', '#fff'],
            mute: ['#000', '#fff'], red: ['#bb394b', '#f6c9cf'],
        };
        const notes = [
            ['E3', 4, 6], ['C3', 3, 6], ['G2', 2, 6], ['E2', 1, 6],
            ['C2', 0, 1], ['C2', 1, 2, 'sel'], ['C2', 2, 3, 'dim', 1], ['C2', 3, 4, 'sel'], ['C2', 4, 5, 'dim', 1], ['C2', 5, 6, 'light'],
            ['C2', 7, 8, 'mute'], ['C2', 9, 14], ['F1', 8, 14], ['A2', 10, 14], ['D3', 11, 14], ['F3', 12, 14],
            ['G1', 16, 22], ['B1', 17, 22], ['D2', 18, 22], ['G2', 19, 22], ['B2', 20, 22],
            ['C2', 24, 28], ['E2', 25, 28], ['G2', 26, 28],
            ['C1', 0, 1, 'mute'], ['C1', 2, 3, 'mute'], ['C1', 4, 5, 'red'], ['C1', 6, 7, 'mute'],
        ];
        notes.forEach(([name, from, to, style = 'dim', bare]) => {
            const x = eighthX(from), end = Math.min(eighthX(to) + 1, 1898);
            const y = 858 - (semis[name[0]] + name[1] * 12) * 15;
            rect(x, y, end - x, 15, '#0a0506');
            if (style === 'mute') rect(x + 1, y + 1, end - x - 2, 13, '#a84652');
            const pad = style === 'mute' ? 2 : 1;
            rect(x + pad, y + pad, end - x - pad * 2, 15 - pad * 2, styles[style][0]);
            if (!bare) text(x + 3, y + 12, name, 10, styles[style][1], 12);
        });

        // --- CONTROLLER LANES ---
        rect(682, 896, 330, 90, '#636566');
        rect(682, 896, 3, 90, '#7b7f84');
        [731, 777, 823, 868, 914, 960].forEach((x, i) => rect(x, 896, 1, 90, i % 2 ? '#838586' : '#6c6e6f'));
        for (let i = 0; i < 8; i++) {
            const x = eighthX(i), muted = [0, 2, 6, 7].includes(i);
            rect(x, 916, 6, 70, '#2b1117');
            rect(x + 1, 917, 4, 68, '#b24b60');
            if (muted) rect(x + 2, 918, 2, 66, '#25060e');
        }
        [892, 985].forEach(y => {
            rect(265, y, 1645, 4, '#1c1f21');
            rect(265, y + 1, 1645, 2, '#75797b');
            rect(1074, y + 1, 26, 2, '#1c1f21');
            [1076, 1082, 1088, 1094].forEach(x => rect(x, y + 1, 4, 2, '#e4e6e6'));
        });
        [894, 987].forEach(y => { rect(195, y, 68, 30, '#5b5e60'); rect(196, y + 1, 66, 28, '#22272a'); });
        text(199, 906, 'ベロシティー', 9, '#c8caca', 40, 700);
        text(199, 998, 'Brightness', 9.500, '#c8caca', 45, 700, 'Liberation Sans');
        text(199, 1012, 'CC 74', 9.500, '#c8caca', 27, 700, 'Liberation Sans');
        rect(1134, 158, 1, 875, '#fff');

        // --- SCROLLBARS ---
        rect(1898, 158, 14, 875, '#202427');
        rect(1898, 158, 12, 22, '#3b3e41');
        rect(1898, 183, 12, 629, '#3b3e41');
        rect(1898, 815, 12, 77, '#3b3e41');
        rect(1898, 896, 12, 89, '#393c3f');
        rect(1898, 989, 12, 44, '#393c3f');
        rect(1900, 472, 8, 216, '#fff');
        rect(1900, 821, 8, 2, '#fff');
        rect(1903, 831, 2, 45, '#707476');
        rect(1900, 884, 8, 2, '#fff');
        rect(1903, 881, 2, 8, '#fff');
        s += `<circle cx="${1904 - X0}" cy="${860 - Y0}" r="4" fill="#fff"/>`;
        s += `<path d="M${1901 - X0} ${167 - Y0}h7l-3.500 6z" fill="#ddd"/>`;
        const chevron = (y, up, c) => { s += `<path d="M${1901 - X0} ${y - Y0}l3 ${up ? -3 : 3}l3 ${up ? 3 : -3}" fill="none" stroke="${c}" stroke-width="1.400" shape-rendering="auto"/>`; };
        chevron(192, true, '#ddd');
        chevron(802, false, '#fff');
        chevron(905, true, '#6a6d6f');
        chevron(975, false, '#6a6d6f');
        chevron(998, true, '#6a6d6f');
        canvas.innerHTML = `<svg class="block w-[1723px] h-[879px]" shape-rendering="crispEdges">${s}</svg>`;

        // Squeeze UI labels to their column widths without changing glyph height
        function fit(el) {
            const w = +el.dataset.w, natural = el.offsetWidth;
            if (!natural) return;
            el.style.marginRight = '';
            const base = parseFloat(getComputedStyle(el).marginRight) || 0;
            el.style.transform = `scaleX(${w / natural})`;
            el.style.marginRight = `${w - natural + base}px`;
        }
        const observer = new ResizeObserver(entries => entries.forEach(e => fit(e.target)));
        const labels = document.querySelectorAll('[data-w]');
        labels.forEach(el => { fit(el); observer.observe(el); });
        window.addEventListener('load', () => labels.forEach(fit));
    </script>
</body>
</html>
